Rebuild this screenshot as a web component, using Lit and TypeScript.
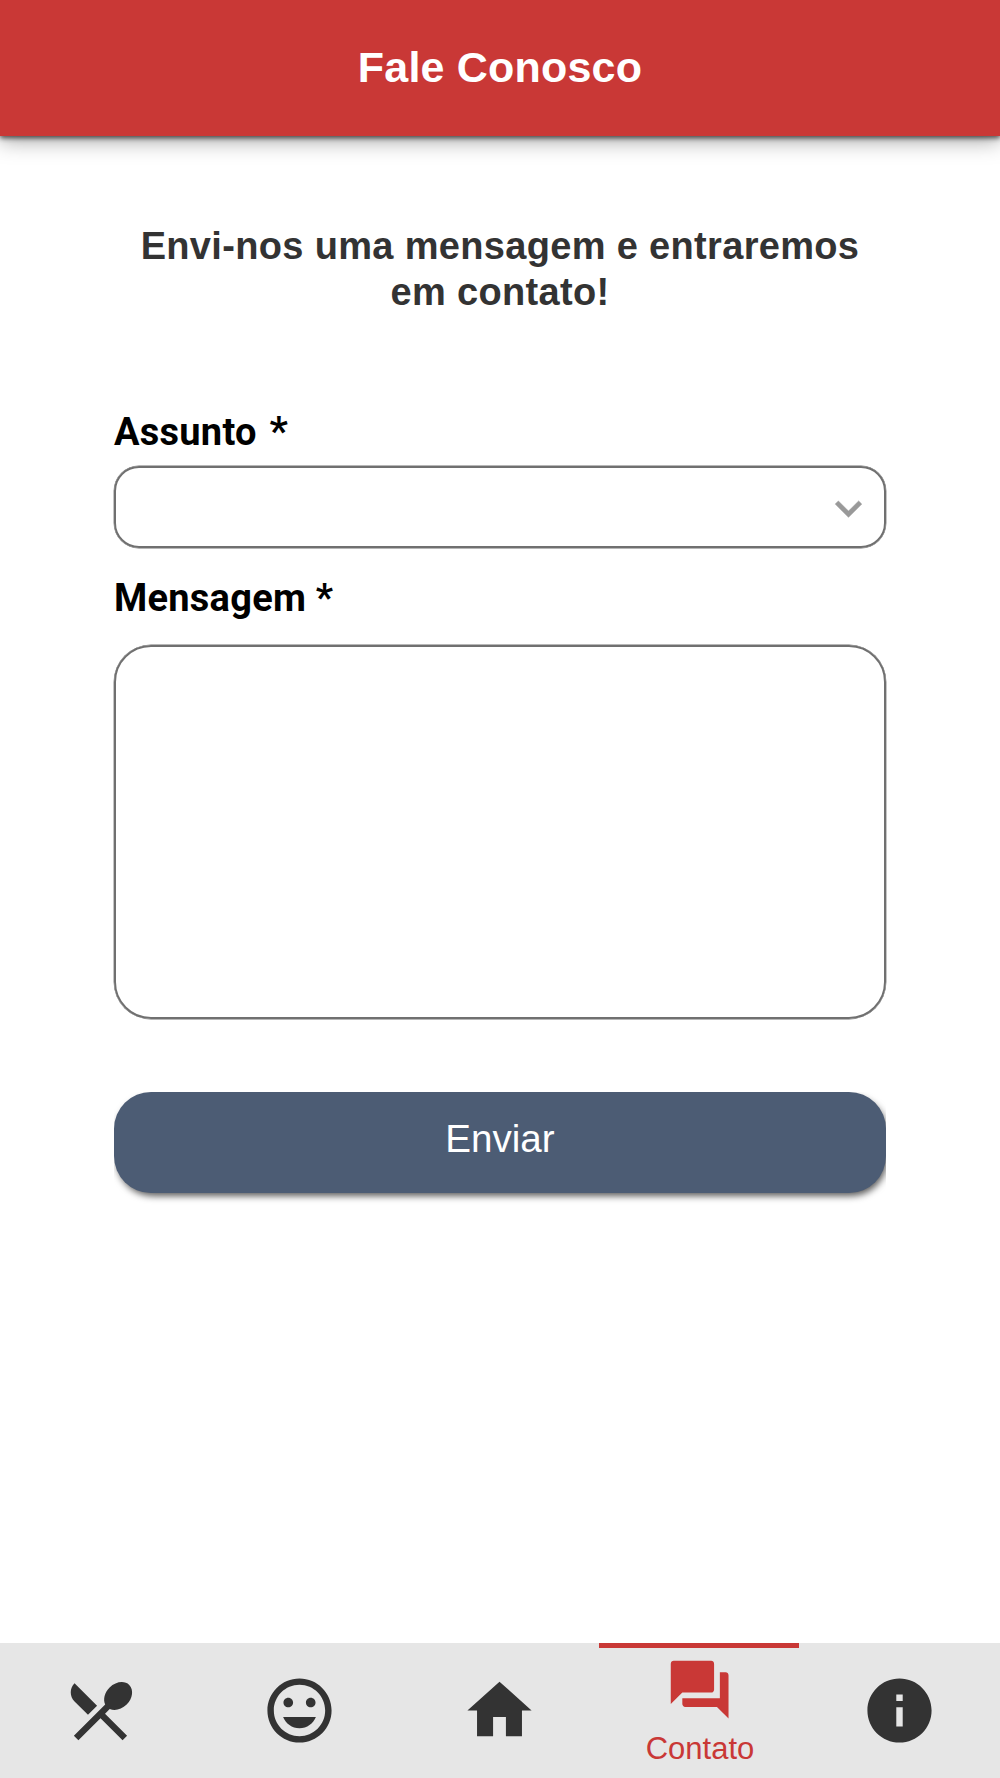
import { LitElement, html, css, svg } from "lit";
import { customElement, state } from "lit/decorators.js";
import { classMap } from "lit/directives/class-map.js";

const tabs = [
  {
    label: "Menu",
    icon: svg`<path d="M8.1 13.34l2.83-2.83L3.91 3.5c-1.56 1.56-1.56 4.09 0 5.66l4.19 4.18zm6.78-1.81c1.53.71 3.68.21 5.27-1.38 1.91-1.91 2.28-4.65.81-6.12-1.46-1.46-4.2-1.1-6.12.81-1.59 1.59-2.09 3.74-1.38 5.27L3.7 19.87l1.41 1.41L12 14.41l6.88 6.88 1.41-1.41L13.41 13l1.47-1.47z"/>`,
  },
  {
    label: "Humor",
    icon: svg`<path d="M11.99 2C6.47 2 2 6.48 2 12s4.47 10 9.99 10C17.52 22 22 17.52 22 12S17.52 2 11.99 2zM12 20c-4.42 0-8-3.58-8-8s3.58-8 8-8 8 3.58 8 8-3.58 8-8 8zm3.5-9c.83 0 1.5-.67 1.5-1.5S16.33 8 15.5 8 14 8.67 14 9.5s.67 1.5 1.5 1.5zm-7 0c.83 0 1.5-.67 1.5-1.5S9.33 8 8.5 8 7 8.67 7 9.5 7.67 11 8.5 11zm3.5 6.5c2.33 0 4.31-1.46 5.11-3.5H6.89c.8 2.04 2.78 3.5 5.11 3.5z"/>`,
  },
  { label: "Home", icon: svg`<path d="M10 20v-6h4v6h5v-8h3L12 3 2 12h3v8z"/>` },
  {
    label: "Contato",
    icon: svg`<path d="M21 6h-2v9H6v2c0 .55.45 1 1 1h11l4 4V7c0-.55-.45-1-1-1zm-4 6V3c0-.55-.45-1-1-1H3c-.55 0-1 .45-1 1v14l4-4h10c.55 0 1-.45 1-1z"/>`,
  },
  {
    label: "Info",
    icon: svg`<path d="M12 2C6.48 2 2 6.48 2 12s4.48 10 10 10 10-4.48 10-10S17.52 2 12 2zm1 15h-2v-6h2v6zm0-8h-2V7h2v2z"/>`,
  },
];

@customElement("app-root")
export class AppRoot extends LitElement {
  @state() private active = 3;

  static styles = css`
    :host {
      display: flex;
      flex-direction: column;
      height: 1778px;
      background: #fff;
      font-family: "Liberation Sans", Arial, sans-serif;
    }
    * { box-sizing: border-box; }
    .header {
      flex: none;
      height: 136px;
      display: flex;
      align-items: center;
      justify-content: center;
      padding-bottom: 2px;
      background: #c93836;
      color: #fff;
      box-shadow: 0 2px 5px rgba(0, 0, 0, 0.65), 0 5px 20px rgba(0, 0, 0, 0.35);
    }
    h1 { margin: 0; font-size: 43px; line-height: 50px; letter-spacing: 0.2px; }
    .content {
      flex: 1;
      display: flex;
      flex-direction: column;
      padding: 87px 114px 0;
    }
    h2 {
      margin: 0 0 94px;
      text-align: center;
      font-size: 38px;
      line-height: 46px;
      letter-spacing: 0.33px;
      color: #333;
    }
    .label {
      font-family: Roboto, sans-serif;
      font-weight: 700;
      font-size: 38px;
      line-height: 46px;
      height: 46px;
      letter-spacing: 0.25px;
      color: #000;
    }
    .star { margin-left: 3px; font-size: 41px; line-height: 40px; font-weight: 600; }
    .select {
      margin: 11px 0 27px;
      height: 82px;
      border: 2px solid #707070;
      box-shadow: 0 0 0 0.4px #707070;
      border-radius: 25px;
      display: flex;
      align-items: center;
      justify-content: flex-end;
      padding: 2px 9px 0 0;
    }
    .chevron { width: 53px; height: 53px; fill: #999; stroke: #999; stroke-width: 0.25; }
    .message {
      display: block;
      margin: 24px 0 73px;
      width: 100%;
      height: 374px;
      border: 2px solid #707070;
      box-shadow: 0 0 0 0.4px #707070;
      border-radius: 37px;
      background: none;
      resize: none;
      outline: none;
    }
    .action { clip-path: inset(0 0 -24px 0); }
    .send {
      display: block;
      width: 100%;
      height: 101px;
      border: 0;
      padding: 0 0 7px;
      border-radius: 37px;
      background: #4c5c74;
      color: #fff;
      font: 38.6px/46px "Liberation Sans", Arial, sans-serif;
      box-shadow: 2px 4px 7px -1px rgba(0, 0, 0, 0.65);
    }
    .tabs {
      flex: none;
      height: 135px;
      display: grid;
      grid-template-columns: 199px repeat(4, 200px);
      background: #e6e6e6;
    }
    .tab {
      display: flex;
      flex-direction: column;
      align-items: center;
      justify-content: center;
      border: 0;
      padding: 0 0 0 1px;
      background: none;
      font: 31px/36px "Liberation Sans", Arial, sans-serif;
      color: #333;
    }
    .tab svg { width: 77px; height: 77px; fill: currentColor; }
    .tab.active {
      justify-content: flex-start;
      padding: 7px 0 0 2px;
      border-top: 5px solid #c93836;
      color: #c93836;
    }
    .tab.active svg { width: 69.3px; height: 69.3px; margin-bottom: 7px; }
  `;

  render() {
    return html`
      <header class="header"><h1>Fale Conosco</h1></header>
      <main class="content">
        <h2>Envi-nos uma mensagem e entraremos<br />em contato!</h2>
        <div class="label">Assunto <span class="star">*</span></div>
        <div class="select">
          <svg class="chevron" viewBox="0 0 24 24"><path d="M16.59 8.59L12 13.17 7.41 8.59 6 10l6 6 6-6z" /></svg>
        </div>
        <div class="label">Mensagem *</div>
        <textarea class="message"></textarea>
        <div class="action"><button class="send">Enviar</button></div>
      </main>
      <nav class="tabs">
        ${tabs.map(
          (tab, i) => html`
            <button class=${classMap({ tab: true, active: i === this.active })} @click=${() => (this.active = i)}>
              <svg viewBox="0 0 24 24">${tab.icon}</svg>
              ${i === this.active ? html`<span>${tab.label}</span>` : null}
            </button>
          `
        )}
      </nav>
    `;
  }
}
